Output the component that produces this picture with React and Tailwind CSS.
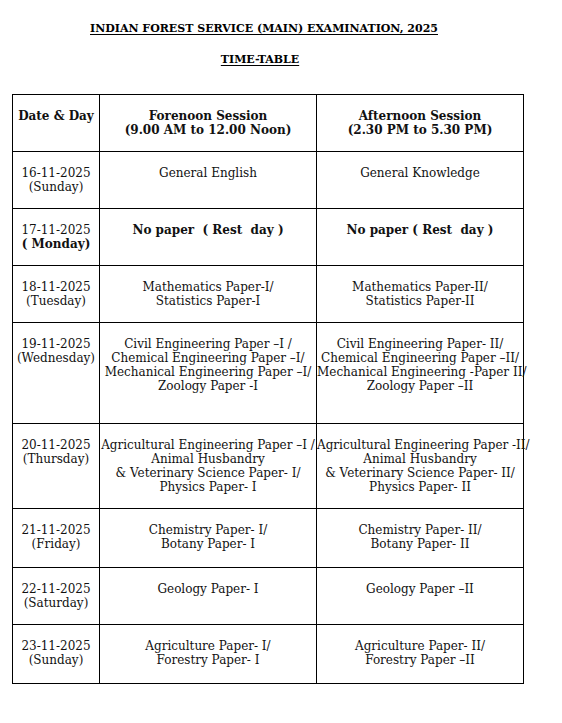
import React from "react";

const rows = [
  {
    date: ["16-11-2025", "(Sunday)"],
    fn: ["General English"],
    an: ["General Knowledge"],
    h: "h-[57px]",
  },
  {
    date: ["17-11-2025", "( Monday)"],
    fn: ["No paper  ( Rest  day )"],
    an: ["No paper ( Rest  day )"],
    bold: true,
    h: "h-[57px]",
  },
  {
    date: ["18-11-2025", "(Tuesday)"],
    fn: ["Mathematics Paper-I/", "Statistics Paper-I"],
    an: ["Mathematics Paper-II/", "Statistics Paper-II"],
    h: "h-[57px]",
  },
  {
    date: ["19-11-2025", "(Wednesday)"],
    fn: [
      "Civil Engineering Paper \u2013I /",
      "Chemical Engineering Paper \u2013I/",
      "Mechanical Engineering Paper \u2013I/",
      "Zoology Paper -I",
    ],
    an: [
      "Civil Engineering Paper- II/",
      "Chemical Engineering Paper \u2013II/",
      "Mechanical Engineering -Paper II/",
      "Zoology Paper \u2013II",
    ],
    h: "h-[101px]",
  },
  {
    date: ["20-11-2025", "(Thursday)"],
    fn: [
      "Agricultural Engineering Paper \u2013I /",
      "Animal Husbandry",
      "& Veterinary Science Paper- I/",
      "Physics Paper- I",
    ],
    an: [
      "Agricultural Engineering Paper -II/",
      "Animal Husbandry",
      "& Veterinary Science Paper- II/",
      "Physics Paper- II",
    ],
    h: "h-[85px]",
  },
  {
    date: ["21-11-2025", "(Friday)"],
    fn: ["Chemistry Paper- I/", "Botany Paper- I"],
    an: ["Chemistry Paper- II/", "Botany Paper- II"],
    h: "h-[59px]",
  },
  {
    date: ["22-11-2025", "(Saturday)"],
    fn: ["Geology Paper- I"],
    an: ["Geology Paper \u2013II"],
    h: "h-[57px]",
  },
  {
    date: ["23-11-2025", "(Sunday)"],
    fn: ["Agriculture Paper- I/", "Forestry Paper- I"],
    an: ["Agriculture Paper- II/", "Forestry Paper \u2013II"],
    h: "h-[59px]",
  },
];

const Lines = ({ lines, bold }) => (
  <>
    {lines.map((l) => (
      <div key={l} className={bold ? "whitespace-pre font-bold" : "whitespace-pre"}>
        {l}
      </div>
    ))}
  </>
);

const cell = "border border-black align-top text-center pt-[14px] px-0 overflow-visible";

export default function App() {
  return (
    <div
      className="w-[562px] h-[723px] bg-white text-[#111] text-[12px] leading-[14px]"
      style={{ fontFamily: '"DejaVu Serif", serif' }}
    >
      <div className="pt-[22px] pl-[12px] w-[516px] text-[11px] font-bold text-black">
        <div className="text-center underline underline-offset-2">
          INDIAN FOREST SERVICE (MAIN) EXAMINATION, 2025
        </div>
        <div className="mt-[17px] pr-[8px] text-center underline underline-offset-2">
          TIME-TABLE
        </div>
      </div>

      <table className="ml-[12px] mt-[27px] table-fixed border-collapse w-[511px]">
        <colgroup>
          <col className="w-[87px]" />
          <col className="w-[217px]" />
          <col className="w-[207px]" />
        </colgroup>
        <tbody>
          <tr className="h-[57px] font-bold">
            <td className={cell}>
              <div className="whitespace-pre">Date &amp; Day</div>
            </td>
            <td className={cell}>
              <div>Forenoon Session</div>
              <div>(9.00 AM to 12.00 Noon)</div>
            </td>
            <td className={cell}>
              <div>Afternoon Session</div>
              <div>(2.30 PM to 5.30 PM)</div>
            </td>
          </tr>
          {rows.map((r) => (
            <tr key={r.date[0]} className={r.h}>
              <td className={cell}>
                <div>{r.date[0]}</div>
                <div className={r.bold ? "font-bold whitespace-pre" : "whitespace-pre"}>{r.date[1]}</div>
              </td>
              <td className={cell}>
                <Lines lines={r.fn} bold={r.bold} />
              </td>
              <td className={cell}>
                <Lines lines={r.an} bold={r.bold} />
              </td>
            </tr>
          ))}
        </tbody>
      </table>
    </div>
  );
}
